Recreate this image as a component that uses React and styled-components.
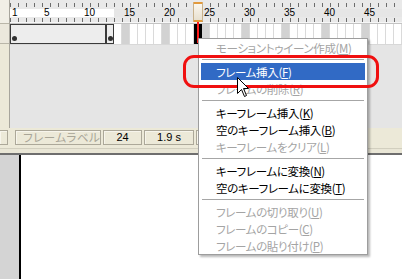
import React from "react";
import styled, { createGlobalStyle } from "styled-components";

const FRAME_W = 8;
const TOTAL_FRAMES = 49;
const CURRENT_FRAME = 24;
const LAST_FRAME = 13;

const frames = Array.from({ length: TOTAL_FRAMES }, (_, i) => i + 1);

const menuGroups = [
  [{ label: "モーショントゥイーン作成", key: "M", disabled: true }],
  [
    { label: "フレーム挿入", key: "F", active: true },
    { label: "フレームの削除", key: "R", disabled: true },
  ],
  [
    { label: "キーフレーム挿入", key: "K" },
    { label: "空のキーフレーム挿入", key: "B" },
    { label: "キーフレームをクリア", key: "L", disabled: true },
  ],
  [
    { label: "キーフレームに変換", key: "N" },
    { label: "空のキーフレームに変換", key: "T" },
  ],
  [
    { label: "フレームの切り取り", key: "U", disabled: true },
    { label: "フレームのコピー", key: "C", disabled: true },
    { label: "フレームの貼り付け", key: "P", disabled: true },
  ],
];

const GlobalStyle = createGlobalStyle`
  html, body {
    margin: 0;
    padding: 0;
  }
  body {
    width: 402px;
    height: 279px;
    overflow: hidden;
    background: #fff;
    font-family: "Noto Sans CJK JP", "Liberation Sans", sans-serif;
  }
`;

const App = () => {
  return (
    <>
      <GlobalStyle />
      <Screen>
        <TimelinePanel>
          <LayerEdge>
            <EdgeHeader />
            <EdgeRow />
            <EdgeRest />
          </LayerEdge>
          <Timeline>
            <TickStrip $h={9} $top={3} />
            <NumberBand>
              {frames.map(f => (
                <NumCell key={f}>{f === 1 || f % 5 === 0 ? f : ""}</NumCell>
              ))}
            </NumberBand>
            <TickStrip $h={5} $top={1} />
            <RulerGap />
            <FrameRow>
              <SpanBox $frames={12}>
                <KeyDot />
              </SpanBox>
              <SpanBox $frames={1}>
                <KeyDot />
              </SpanBox>
              {frames
                .filter(f => f > LAST_FRAME)
                .map(f => (
                  <FrameCell
                    key={f}
                    $kind={f === CURRENT_FRAME ? "current" : f % 5 === 0 ? "fifth" : "plain"}
                  />
                ))}
            </FrameRow>
            <EmptyLayers />
            <PlayheadHandle style={{ left: (CURRENT_FRAME - 1) * FRAME_W - 1 }} />
            <PlayheadLine style={{ left: (CURRENT_FRAME - 1) * FRAME_W + 3 }} />
          </Timeline>
        </TimelinePanel>

        <StatusBar>
          <Field $w={4} $stub />
          <Field $w={86} $ml={5} $disabled>
            フレームラベル
          </Field>
          <Field $w={39} $center>
            24
          </Field>
          <Field $w={50} $center>
            1.9 s
          </Field>
          <Field $w={60} />
        </StatusBar>
        <Divider />

        <Stage>
          <StageGutter />
          <StageEdge />
          <Canvas />
        </Stage>

        <Menu>
          {menuGroups.map((group, gi) => (
            <React.Fragment key={gi}>
              {gi > 0 && <Separator />}
              {group.map(item => (
                <MenuItem key={item.key} $active={item.active} $disabled={item.disabled}>
                  {item.label}(<u>{item.key}</u>)
                </MenuItem>
              ))}
            </React.Fragment>
          ))}
        </Menu>

        <Highlight />

        <Cursor width="13" height="21" viewBox="0 0 13 21">
          <path
            d="M0.5 0.5 L0.5 16.5 L4.5 12.5 L7.5 19.5 L9.5 18.5 L6.5 11.5 L11.5 11.5 Z"
            fill="#fff"
            stroke="#000"
            strokeWidth="1"
            strokeLinejoin="miter"
          />
        </Cursor>
      </Screen>
    </>
  );
};

export default App;

const Screen = styled.div`
  position: relative;
  width: 402px;
  height: 279px;
  display: flex;
  flex-direction: column;
  overflow: hidden;
  background: #fff;
`;

const TimelinePanel = styled.div`
  display: flex;
  height: 128px;
  flex-shrink: 0;
`;

const LayerEdge = styled.div`
  width: 9px;
  flex-shrink: 0;
  display: flex;
  flex-direction: column;
  border-right: 1px solid #a7a59c;
  background: #ece9d8;
`;

const EdgeHeader = styled.div`
  height: 23px;
  background: #f1efe6;
  border-bottom: 1px solid #b9b6a8;
`;

const EdgeRow = styled.div`
  height: 19px;
  border-bottom: 1px solid #b9b6a8;
  background: #ebe8dc;
`;

const EdgeRest = styled.div`
  flex: 1;
`;

const Timeline = styled.div`
  position: relative;
  flex: 1;
  display: flex;
  flex-direction: column;
  overflow: hidden;
`;

const TickStrip = styled.div`
  height: ${p => p.$h}px;
  flex-shrink: 0;
  background-color: #e9e9e9;
  background-image: repeating-linear-gradient(
    to right,
    #6c6c6c 0 1px,
    transparent 1px ${FRAME_W}px
  );
  background-size: 100% 4px;
  background-position: 0 ${p => p.$top}px;
  background-repeat: no-repeat;
`;

const NumberBand = styled.div`
  height: 8px;
  flex-shrink: 0;
  display: flex;
  background: linear-gradient(
    to right,
    #fff 0 ${LAST_FRAME * FRAME_W}px,
    #e6e6e6 ${LAST_FRAME * FRAME_W}px
  );
`;

const NumCell = styled.div`
  width: ${FRAME_W}px;
  flex-shrink: 0;
  padding-left: 2px;
  box-sizing: border-box;
  white-space: nowrap;
  font-family: "Liberation Sans", Arial, sans-serif;
  font-size: 10px;
  line-height: 8px;
  color: #000;
`;

const RulerGap = styled.div`
  height: 1px;
  flex-shrink: 0;
  background: #f6f6f6;
  border-bottom: 1px solid #c4c4c4;
`;

const FrameRow = styled.div`
  height: 20px;
  flex-shrink: 0;
  display: flex;
  background: #fff;
`;

const SpanBox = styled.div`
  width: ${p => p.$frames * FRAME_W}px;
  flex-shrink: 0;
  box-sizing: border-box;
  border: 1px solid #3a3a3a;
  background: #ededed;
  display: flex;
  align-items: flex-end;
  padding: 0 0 2px 1px;
`;

const KeyDot = styled.span`
  width: 5px;
  height: 5px;
  border-radius: 50%;
  background: #303030;
`;

const FrameCell = styled.div`
  width: ${FRAME_W}px;
  flex-shrink: 0;
  box-sizing: border-box;
  border-right: 1px solid ${p => (p.$kind === "current" ? "#000" : "#dadada")};
  background: ${p =>
    p.$kind === "current" ? "#000" : p.$kind === "fifth" ? "#d2d2d2" : "#fff"};
`;

const EmptyLayers = styled.div`
  flex: 1;
  background: #e5e5e5;
  border-top: 1px solid #d8d8d8;
`;

const PlayheadHandle = styled.div`
  position: absolute;
  top: 2px;
  width: 10px;
  height: 20px;
  box-sizing: border-box;
  border: 1px solid #c9b28c;
  border-top: 2px solid #e39a3c;
  border-bottom: 2px solid #e39a3c;
  border-radius: 1px;
  background: linear-gradient(to bottom, #fbf7ee, #e8e0cf);
`;

const PlayheadLine = styled.div`
  position: absolute;
  top: 22px;
  width: 2px;
  height: 21px;
  background: #ff1a1a;
`;

const StatusBar = styled.div`
  height: 20px;
  flex-shrink: 0;
  box-sizing: border-box;
  padding-top: 2px;
  display: flex;
  align-items: flex-start;
  gap: 2px;
  background: #ece9d8;
`;

const Field = styled.div`
  width: ${p => p.$w}px;
  height: 15px;
  flex-shrink: 0;
  box-sizing: border-box;
  margin-left: ${p => p.$ml || 0}px;
  border: 1px solid #aca899;
  border-left-width: ${p => (p.$stub ? 0 : 1)}px;
  box-shadow: inset 1px 1px 0 #f7f5ec;
  padding-left: ${p => (p.$center ? 0 : 7)}px;
  text-align: ${p => (p.$center ? "center" : "left")};
  font-family: ${p =>
    p.$disabled ? `"Noto Sans CJK JP", sans-serif` : `"Liberation Sans", Arial, sans-serif`};
  font-size: ${p => (p.$disabled ? 11.5 : 11)}px;
  font-feature-settings: "palt";
  letter-spacing: ${p => (p.$disabled ? "0.6px" : "0")};
  line-height: 13px;
  color: ${p => (p.$disabled ? "#a8a597" : "#000")};
  white-space: nowrap;
  overflow: hidden;
`;

const Divider = styled.div`
  height: 4px;
  flex-shrink: 0;
  background: #e9e6d6;
  border-top: 1px solid #d2cfbf;
  border-bottom: 2px solid #6e6e6e;
`;

const Stage = styled.div`
  flex: 1;
  display: flex;
`;

const StageGutter = styled.div`
  width: 19px;
  background: #d4d4d4;
`;

const StageEdge = styled.div`
  width: 2px;
  background: #000;
`;

const Canvas = styled.div`
  flex: 1;
  background: #fff;
`;

const Menu = styled.div`
  position: absolute;
  left: 198px;
  top: 38px;
  width: 170px;
  box-sizing: border-box;
  padding: 0 2px;
  background: #fff;
  border: 1px solid #9d9d9d;
  box-shadow: 2px 2px 2px rgba(0, 0, 0, 0.28);
  display: flex;
  flex-direction: column;
`;

const MenuItem = styled.div`
  height: 17px;
  box-sizing: border-box;
  padding-left: 15px;
  display: flex;
  align-items: center;
  font-size: 11.5px;
  font-feature-settings: "palt";
  letter-spacing: -0.35px;
  white-space: nowrap;
  color: ${p => (p.$active ? "#fff" : p.$disabled ? "#a4a4a4" : "#000")};
  background: ${p => (p.$active ? "#316ac5" : "transparent")};

  u {
    text-decoration: underline;
    text-underline-offset: 1px;
  }
`;

const Separator = styled.div`
  height: 7px;
  box-sizing: border-box;
  margin: 0 1px;
  border-top: 3px solid transparent;
  border-bottom: 3px solid transparent;
  background: #a6a6a6;
  background-clip: padding-box;
`;

const Highlight = styled.div`
  position: absolute;
  left: 183px;
  top: 55px;
  width: 196px;
  height: 33px;
  box-sizing: border-box;
  border: 3px solid #f01010;
  border-radius: 11px;
`;

const Cursor = styled.svg`
  position: absolute;
  left: 237px;
  top: 77px;
`;
